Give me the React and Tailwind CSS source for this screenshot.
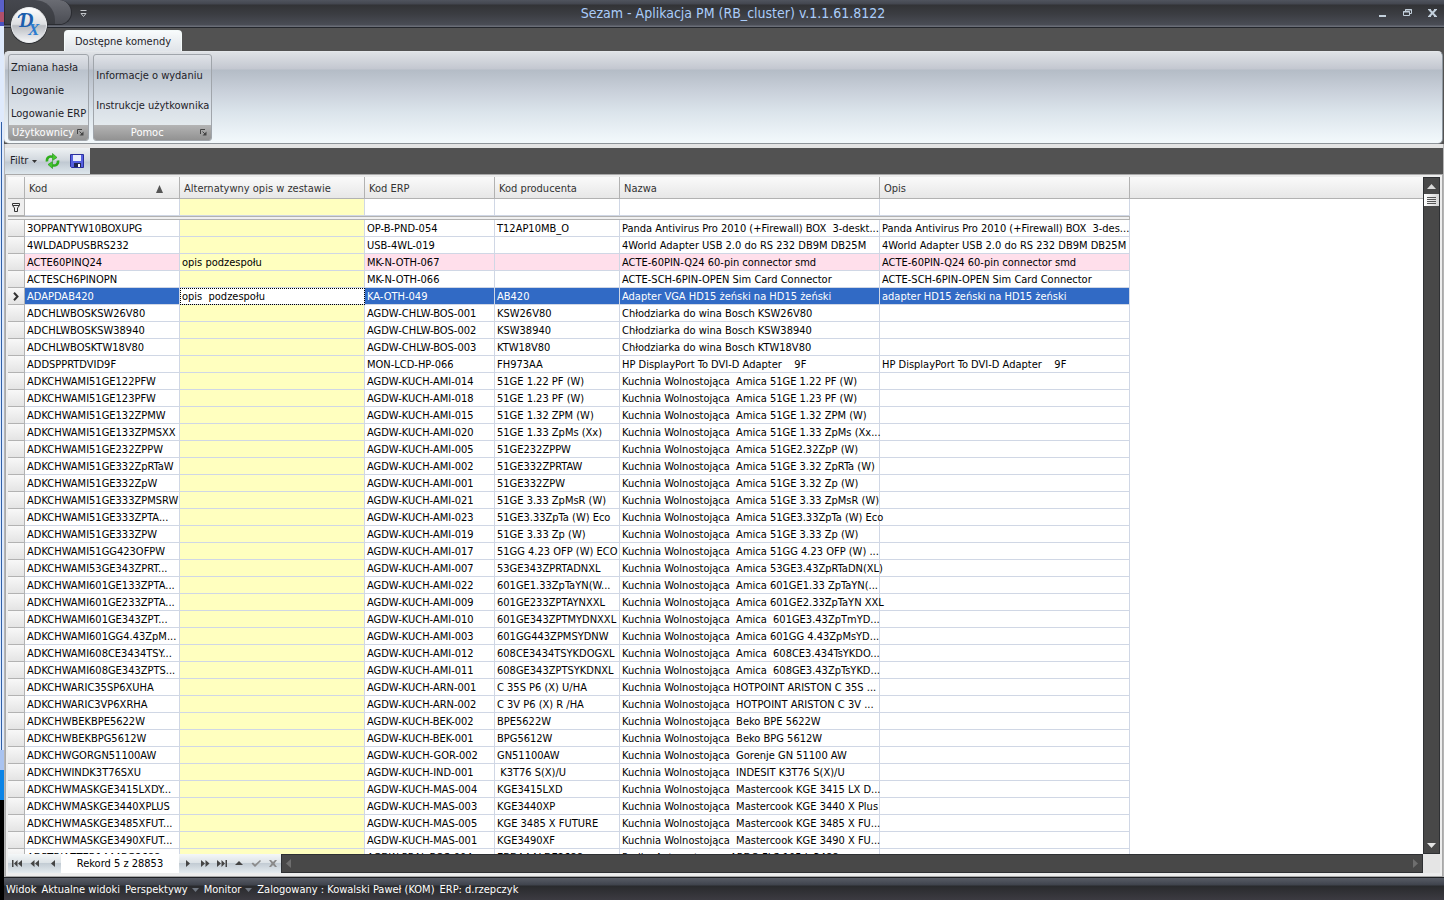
// File: src/App.jsx
const columns = [
  { key: 'kod', label: 'Kod', sorted: true },
  { key: 'alt', label: 'Alternatywny opis w zestawie' },
  { key: 'erp', label: 'Kod ERP' },
  { key: 'prod', label: 'Kod producenta' },
  { key: 'nazwa', label: 'Nazwa' },
  { key: 'opis', label: 'Opis' },
];

// kod, alternatywny opis, kod ERP, kod producenta, nazwa, opis
const rows = [
  ['3OPPANTYW10BOXUPG', '', 'OP-B-PND-054', 'T12AP10MB_O', 'Panda Antivirus Pro 2010 (+Firewall) BOX  3-deskt...', 'Panda Antivirus Pro 2010 (+Firewall) BOX  3-des...'],
  ['4WLDADPUSBRS232', '', 'USB-4WL-019', '', '4World Adapter USB 2.0 do RS 232 DB9M DB25M', '4World Adapter USB 2.0 do RS 232 DB9M DB25M'],
  ['ACTE60PINQ24', 'opis podzespołu', 'MK-N-OTH-067', '', 'ACTE-60PIN-Q24 60-pin connector smd', 'ACTE-60PIN-Q24 60-pin connector smd'],
  ['ACTESCH6PINOPN', '', 'MK-N-OTH-066', '', 'ACTE-SCH-6PIN-OPEN Sim Card Connector', 'ACTE-SCH-6PIN-OPEN Sim Card Connector'],
  ['ADAPDAB420', 'opis  podzespołu', 'KA-OTH-049', 'AB420', 'Adapter VGA HD15 żeński na HD15 żeński', 'adapter HD15 żeński na HD15 żeński'],
  ['ADCHLWBOSKSW26V80', '', 'AGDW-CHLW-BOS-001', 'KSW26V80', 'Chłodziarka do wina Bosch KSW26V80', ''],
  ['ADCHLWBOSKSW38940', '', 'AGDW-CHLW-BOS-002', 'KSW38940', 'Chłodziarka do wina Bosch KSW38940', ''],
  ['ADCHLWBOSKTW18V80', '', 'AGDW-CHLW-BOS-003', 'KTW18V80', 'Chłodziarka do wina Bosch KTW18V80', ''],
  ['ADDSPPRTDVID9F', '', 'MON-LCD-HP-066', 'FH973AA', 'HP DisplayPort To DVI-D Adapter    9F', 'HP DisplayPort To DVI-D Adapter    9F'],
  ['ADKCHWAMI51GE122PFW', '', 'AGDW-KUCH-AMI-014', '51GE 1.22 PF (W)', 'Kuchnia Wolnostojąca  Amica 51GE 1.22 PF (W)', ''],
  ['ADKCHWAMI51GE123PFW', '', 'AGDW-KUCH-AMI-018', '51GE 1.23 PF (W)', 'Kuchnia Wolnostojąca  Amica 51GE 1.23 PF (W)', ''],
  ['ADKCHWAMI51GE132ZPMW', '', 'AGDW-KUCH-AMI-015', '51GE 1.32 ZPM (W)', 'Kuchnia Wolnostojąca  Amica 51GE 1.32 ZPM (W)', ''],
  ['ADKCHWAMI51GE133ZPMSXX', '', 'AGDW-KUCH-AMI-020', '51GE 1.33 ZpMs (Xx)', 'Kuchnia Wolnostojąca  Amica 51GE 1.33 ZpMs (Xx...', ''],
  ['ADKCHWAMI51GE232ZPPW', '', 'AGDW-KUCH-AMI-005', '51GE232ZPPW', 'Kuchnia Wolnostojąca  Amica 51GE2.32ZpP (W)', ''],
  ['ADKCHWAMI51GE332ZpRTaW', '', 'AGDW-KUCH-AMI-002', '51GE332ZPRTAW', 'Kuchnia Wolnostojąca  Amica 51GE 3.32 ZpRTa (W)', ''],
  ['ADKCHWAMI51GE332ZpW', '', 'AGDW-KUCH-AMI-001', '51GE332ZPW', 'Kuchnia Wolnostojąca  Amica 51GE 3.32 Zp (W)', ''],
  ['ADKCHWAMI51GE333ZPMSRW', '', 'AGDW-KUCH-AMI-021', '51GE 3.33 ZpMsR (W)', 'Kuchnia Wolnostojąca  Amica 51GE 3.33 ZpMsR (W)', ''],
  ['ADKCHWAMI51GE333ZPTA...', '', 'AGDW-KUCH-AMI-023', '51GE3.33ZpTa (W) Eco', 'Kuchnia Wolnostojąca  Amica 51GE3.33ZpTa (W) Eco', ''],
  ['ADKCHWAMI51GE333ZPW', '', 'AGDW-KUCH-AMI-019', '51GE 3.33 Zp (W)', 'Kuchnia Wolnostojąca  Amica 51GE 3.33 Zp (W)', ''],
  ['ADKCHWAMI51GG423OFPW', '', 'AGDW-KUCH-AMI-017', '51GG 4.23 OFP (W) ECO', 'Kuchnia Wolnostojąca  Amica 51GG 4.23 OFP (W) ...', ''],
  ['ADKCHWAMI53GE343ZPRT...', '', 'AGDW-KUCH-AMI-007', '53GE343ZPRTADNXL', 'Kuchnia Wolnostojąca  Amica 53GE3.43ZpRTaDN(XL)', ''],
  ['ADKCHWAMI601GE133ZPTA...', '', 'AGDW-KUCH-AMI-022', '601GE1.33ZpTaYN(W...', 'Kuchnia Wolnostojąca  Amica 601GE1.33 ZpTaYN(...', ''],
  ['ADKCHWAMI601GE233ZPTA...', '', 'AGDW-KUCH-AMI-009', '601GE233ZPTAYNXXL', 'Kuchnia Wolnostojąca  Amica 601GE2.33ZpTaYN XXL', ''],
  ['ADKCHWAMI601GE343ZPT...', '', 'AGDW-KUCH-AMI-010', '601GE343ZPTMYDNXXL', 'Kuchnia Wolnostojąca  Amica  601GE3.43ZpTmYD...', ''],
  ['ADKCHWAMI601GG4.43ZpM...', '', 'AGDW-KUCH-AMI-003', '601GG443ZPMSYDNW', 'Kuchnia Wolnostojąca  Amica 601GG 4.43ZpMsYD...', ''],
  ['ADKCHWAMI608CE3434TSY...', '', 'AGDW-KUCH-AMI-012', '608CE3434TSYKDOGXL', 'Kuchnia Wolnostojąca  Amica  608CE3.434TsYKDO...', ''],
  ['ADKCHWAMI608GE343ZPTS...', '', 'AGDW-KUCH-AMI-011', '608GE343ZPTSYKDNXL', 'Kuchnia Wolnostojąca  Amica  608GE3.43ZpTsYKD...', ''],
  ['ADKCHWARIC35SP6XUHA', '', 'AGDW-KUCH-ARN-001', 'C 35S P6 (X) U/HA', 'Kuchnia Wolnostojąca HOTPOINT ARISTON C 35S ...', ''],
  ['ADKCHWARIC3VP6XRHA', '', 'AGDW-KUCH-ARN-002', 'C 3V P6 (X) R /HA', 'Kuchnia Wolnostojąca  HOTPOINT ARISTON C 3V ...', ''],
  ['ADKCHWBEKBPE5622W', '', 'AGDW-KUCH-BEK-002', 'BPE5622W', 'Kuchnia Wolnostojąca  Beko BPE 5622W', ''],
  ['ADKCHWBEKBPG5612W', '', 'AGDW-KUCH-BEK-001', 'BPG5612W', 'Kuchnia Wolnostojąca  Beko BPG 5612W', ''],
  ['ADKCHWGORGN51100AW', '', 'AGDW-KUCH-GOR-002', 'GN51100AW', 'Kuchnia Wolnostojąca  Gorenje GN 51100 AW', ''],
  ['ADKCHWINDK3T76SXU', '', 'AGDW-KUCH-IND-001', ' K3T76 S(X)/U', 'Kuchnia Wolnostojąca  INDESIT K3T76 S(X)/U', ''],
  ['ADKCHWMASKGE3415LXDY...', '', 'AGDW-KUCH-MAS-004', 'KGE3415LXD', 'Kuchnia Wolnostojąca  Mastercook KGE 3415 LX D...', ''],
  ['ADKCHWMASKGE3440XPLUS', '', 'AGDW-KUCH-MAS-003', 'KGE3440XP', 'Kuchnia Wolnostojąca  Mastercook KGE 3440 X Plus', ''],
  ['ADKCHWMASKGE3485XFUT...', '', 'AGDW-KUCH-MAS-005', 'KGE 3485 X FUTURE', 'Kuchnia Wolnostojąca  Mastercook KGE 3485 X FU...', ''],
  ['ADKCHWMASKGE3490XFUT...', '', 'AGDW-KUCH-MAS-001', 'KGE3490XF', 'Kuchnia Wolnostojąca  Mastercook KGE 3490 X FU...', ''],
  ['ADPTRJAZTER1444BG2688', '', 'AGDW-PRAL-BOS-004', 'EBDAAALDE2688', 'Pralka Automatyczna ARDO FLS 105 L 3488', ''],
];

const SELECTED = 4;
const HIGHLIGHTED = 2;

function cellClass(rowIndex, key) {
  if (key === 'alt') {
    return rowIndex === SELECTED
      ? 'bg-white outline-1 -outline-offset-1 outline-dotted outline-black'
      : 'bg-[#ffffbf]';
  }
  if (rowIndex === SELECTED) return 'bg-[#316ac5] text-white';
  if (rowIndex === HIGHLIGHTED) return 'bg-[#ffdfeb]';
  return 'bg-white';
}

function Logo() {
  return (
    <svg width="38" height="38" viewBox="0 0 38 38" className="absolute left-1.5 top-1.5 z-10" aria-hidden="true">
      <defs>
        <linearGradient id="orb" x1="0" y1="0" x2="0" y2="1">
          <stop offset="0" stopColor="#ffffff" />
          <stop offset="0.48" stopColor="#dcdee1" />
          <stop offset="0.52" stopColor="#b9bcc1" />
          <stop offset="1" stopColor="#f6f7f9" />
        </linearGradient>
      </defs>
      <circle cx="19" cy="19.5" r="18.5" fill="#2b2d31" />
      <circle cx="19" cy="19" r="17.5" fill="url(#orb)" stroke="#eceef0" />
      <g fill="#1c5fae" fontFamily="Liberation Serif, serif" fontStyle="italic" fontWeight="bold">
        <text x="9" y="21" fontSize="20">D</text>
        <text x="18" y="29" fontSize="17" fill="#2b7cd0">X</text>
      </g>
      <path d="M8.500 12c0-3 3-4 7-4" fill="none" stroke="#1c5fae" strokeWidth="1.5" />
    </svg>
  );
}

function TitleBar() {
  return (
    <header className="relative flex h-7 shrink-0 items-center border-b border-[#24272d] bg-[linear-gradient(#50545e_0px,#43464f_4px,#323336_5px,#3b3d42_14px,#4a4d56_25px,#6a6e78_26px)]">
      <Logo />
      <div className="h-full w-[68px] pb-0.5">
        <div className="h-full rounded-r-full border border-t-0 border-[#2a2c31] bg-[linear-gradient(#6a6c73,#4b4d54)]">
          <div className="h-full w-[50px] rounded-tr-[20px] bg-[linear-gradient(#45474e,#3b3d42)]" />
        </div>
      </div>
      <button aria-label="Dostosuj pasek" className="ml-2 text-[#c5c8cc]">
        <svg width="7" height="8" viewBox="0 0 7 8" fill="none" stroke="currentColor">
          <path d="M0.5 0.5h6M1 3.5h5L3.5 6.5z" />
        </svg>
      </button>
      <h1 className="flex-1 pb-0.5 text-center text-[14px] leading-4 text-[#abcdfa]">
        Sezam - Aplikacja PM (RB_cluster) v.1.1.61.8122
      </h1>
      <div className="flex items-center gap-4 pr-[7px] pb-0.5 text-[#c3d0dc]">
        <button aria-label="Minimalizuj">
          <svg width="8" height="10" viewBox="0 0 8 10" fill="currentColor"><path d="M0 7h7v2H0z" /></svg>
        </button>
        <button aria-label="Przywróć">
          <svg width="9" height="8" viewBox="0 0 9 8" fill="none" stroke="currentColor">
            <path d="M2.5 2V0.5h6v4H7M2 1h7M0.5 2.5h6v4h-6zM0 3h7" />
          </svg>
        </button>
        <button aria-label="Zamknij">
          <svg width="9" height="8" viewBox="0 0 9 8" fill="none" stroke="currentColor" strokeWidth="2">
            <path d="M1.2 0.5l6.6 7M7.8 0.5l-6.6 7" />
            <path d="M0 0.5h3M6 0.5h3M0 7.5h3M6 7.5h3" strokeWidth="1" />
          </svg>
        </button>
      </div>
    </header>
  );
}

function RibbonGroup({ title, items, roomy }) {
  return (
    <section className="flex h-[87px] flex-col overflow-hidden rounded-[3px] border border-[#a0a5ab] bg-[linear-gradient(#e0e3e8_0px,#c8cdd5_14px,#bac2cc_15px,#d5dce4_45px,#e3e9ed_70px)]">
      <div className={`flex flex-1 flex-col items-start justify-center px-0.5 pt-0.5 ${roomy ? 'gap-3.5' : 'gap-[7px]'}`}>
        {items.map((item) => (
          <button key={item} className="leading-4 whitespace-nowrap text-[#1e2229]">{item}</button>
        ))}
      </div>
      <div className="flex h-[15px] items-center bg-[linear-gradient(#b4b4b4,#929292)] pr-1 text-white">
        <h2 className="flex-1 text-center leading-[15px] whitespace-nowrap">{title}</h2>
        <button aria-label={`${title} - opcje`}>
          <svg width="7" height="7" viewBox="0 0 7 7" fill="none" stroke="#444">
            <path d="M0.500 5V0.500H5M2.500 2.500l2.500 2.500" />
            <path d="M6.500 2.500v4h-4z" fill="#444" stroke="none" />
          </svg>
        </button>
      </div>
    </section>
  );
}

function Ribbon() {
  return (
    <>
      <nav className="flex h-[23px] shrink-0 items-end bg-[#525252] pl-[60px]">
        <button className="h-[21px] rounded-t border border-b-0 border-[#f4fafa] bg-[linear-gradient(#f8fbfc,#e0e4e9)] px-2.5 pt-0.5 leading-4 text-[#1e2229]">
          Dostępne komendy
        </button>
      </nav>
      <div className="bg-[#525252] pr-px">
        <div className="flex h-[93px] gap-1 rounded-[5px] border border-[#e4e7ea] border-r-[#8e979f] border-b-[#8e9499] bg-[linear-gradient(#dfe2e6_0px,#c3c7d0_17px,#b4bcc6_18px,#c8cfd9_38px,#dbe4eb_60px,#f3f9fc_91px)] px-[3px] pt-0.5">
          <RibbonGroup title="Użytkownicy" items={['Zmiana hasła', 'Logowanie', 'Logowanie ERP']} />
          <RibbonGroup title="Pomoc" items={['Informacje o wydaniu', 'Instrukcje użytkownika']} roomy />
        </div>
      </div>
    </>
  );
}

function Toolbar() {
  return (
    <div className="flex h-[26px] shrink-0 bg-[#525252]">
      <div className="flex items-center bg-[linear-gradient(#eef2f4,#d3d9df_45%,#c0c9d2_55%,#dde6ec)] pr-1.5 pl-[5px]">
        <button className="flex items-center gap-1 text-[#1e2229]">
          Filtr
          <svg width="5" height="3" viewBox="0 0 5 3" fill="#333"><path d="M0 0h5L2.5 3z" /></svg>
        </button>
        <button aria-label="Odśwież" className="ml-2">
          <svg width="15" height="16" viewBox="0 0 15 16">
            <path d="M2 8.500C1.500 4.500 4.500 2.800 7.500 3.800" fill="none" stroke="#2fae1d" strokeWidth="2.6" />
            <path d="M7.500 0.500v7L12 4.500z" fill="#43c92c" stroke="#1f8f12" strokeWidth="0.6" />
            <path d="M13 7.500c0.500 4-2.500 5.700-5.500 4.700" fill="none" stroke="#2fae1d" strokeWidth="2.6" />
            <path d="M7.500 15.500v-7L3 11.500z" fill="#43c92c" stroke="#1f8f12" strokeWidth="0.6" />
          </svg>
        </button>
        <button aria-label="Zapisz" className="ml-2.5">
          <svg width="14" height="14" viewBox="0 0 14 14">
            <path d="M0.500 0.500h13v13h-12l-1-1z" fill="#5560e0" stroke="#2a2f9c" />
            <path d="M3 1h8v6H3z" fill="#e9edfb" />
            <path d="M4 9h7v4H4z" fill="#20264f" />
            <path d="M8 10h2v3H8z" fill="#fff" />
          </svg>
        </button>
      </div>
    </div>
  );
}

function Grid() {
  return (
    <table className="w-full table-fixed border-separate border-spacing-0 text-left">
      <colgroup>
        <col className="w-[17px]" />
        <col className="w-[155px]" />
        <col className="w-[185px]" />
        <col className="w-[130px]" />
        <col className="w-[125px]" />
        <col className="w-[260px]" />
        <col className="w-[250px]" />
        <col />
      </colgroup>
      <thead>
        <tr className="h-[22px] bg-[linear-gradient(#fafafa,#e6e6e6)] text-[#333]">
          <td className="border-r border-b border-[#b2b2b2] p-0" />
          {columns.map((c) => (
            <th key={c.key} scope="col" className="border-r border-b border-[#b2b2b2] p-0 pl-1 font-normal whitespace-nowrap">
              <span className="flex items-center justify-between pt-0.5 pr-4 leading-4">
                {c.label}
                {c.sorted && (
                  <svg width="7" height="8" viewBox="0 0 7 8" fill="#555"><path d="M3.500 0L7 8H0z" /></svg>
                )}
              </span>
            </th>
          ))}
          <td className="border-b border-[#b2b2b2] p-0" />
        </tr>
        <tr className="h-[17px]">
          <td className="border-r border-b border-[#b2b2b2] bg-[#efefef] p-0">
            <svg width="8" height="9" viewBox="0 0 8 9" fill="none" stroke="#333" className="mx-auto">
              <path d="M0.500 0.500h7v2L5.500 5v3.500h-3V5l-2-2.500zM1 2.500h6" />
            </svg>
          </td>
          {columns.map((c) => (
            <td key={c.key} className={`border-r border-b border-[#d0d7e5] p-0 ${c.key === 'alt' ? 'bg-[#ffffbf]' : 'bg-white'}`}>
              <input aria-label={c.label} className="block h-4 w-full px-0.5 outline-none" />
            </td>
          ))}
          <td className="p-0" />
        </tr>
        <tr className="h-1">
          <td colSpan={7} className="h-1 border-y border-r border-[#b2b2b2] bg-[#f0f0f0] p-0" />
          <td className="p-0" />
        </tr>
      </thead>
      <tbody>
        {rows.map((row, i) => (
          <tr key={row[0]} className="h-[17px]">
            <td className="border-r border-b border-[#b2b2b2] bg-[linear-gradient(#f8f8f8,#e4e4e4)] p-0">
              {i === SELECTED && (
                <svg width="6" height="9" viewBox="0 0 6 9" fill="none" stroke="#333" strokeWidth="2" className="mx-auto">
                  <path d="M1 0.700l3.500 3.800L1 8.300" />
                </svg>
              )}
            </td>
            {columns.map((c, j) => (
              <td key={c.key} className={`border-r border-b border-[#d0d7e5] p-0 pt-0.5 pl-0.5 leading-[14px] whitespace-pre ${cellClass(i, c.key)}`}>
                {row[j]}
              </td>
            ))}
            <td className="p-0" />
          </tr>
        ))}
      </tbody>
    </table>
  );
}

function VerticalScroll() {
  return (
    <div className="flex w-[17px] shrink-0 flex-col items-center border border-[#2e3033] bg-[#484848]">
      <button aria-label="W górę" className="flex h-4 items-center">
        <svg width="9" height="5" viewBox="0 0 9 5" fill="#d8d8d8"><path d="M4.500 0L9 5H0z" /></svg>
      </button>
      <button aria-label="Przewiń" className="flex h-3 w-full flex-col items-center justify-center gap-px bg-[linear-gradient(90deg,#ffffff,#d4d4d4)]">
        <span className="h-px w-[9px] bg-[#555]" />
        <span className="h-px w-[9px] bg-[#555]" />
        <span className="h-px w-[9px] bg-[#555]" />
        <span className="h-px w-[9px] bg-[#555]" />
      </button>
      <div className="flex-1" />
      <button aria-label="W dół" className="flex h-4 items-center">
        <svg width="9" height="5" viewBox="0 0 9 5" fill="#e4e4e4"><path d="M0 0h9L4.500 5z" /></svg>
      </button>
    </div>
  );
}

const navBefore = [
  { label: 'Pierwszy', d: 'M0 0h1.500v7H0zM5.500 0v7L2 3.500zM10 0v7L6 3.500z' },
  { label: 'Poprzednia strona', d: 'M4.500 0v7L0.500 3.500zM9 0v7L5 3.500z' },
  { label: 'Poprzedni', d: 'M7 0v7L3 3.500z' },
];

const navAfter = [
  { label: 'Następny', d: 'M3 0v7l4-3.500z' },
  { label: 'Następna strona', d: 'M1 0v7l4-3.500zM5.500 0v7l4-3.500z' },
  { label: 'Ostatni', d: 'M0 0v7l4-3.500zM4.500 0v7L8 3.500zM8.500 0H10v7H8.500z' },
  { label: 'Edytuj', d: 'M1 5l4-4 4 4z' },
  { label: 'Zatwierdź', d: 'M0.500 3.500L2 2.500l2 2L9 0l1 1-6 6z', muted: true },
  { label: 'Anuluj', d: 'M1 0h2l2 2 2-2h2L6.500 3.500 9 7H7L5 5 3 7H1l2.500-3.500z', muted: true },
];

function NavButton({ label, d, muted }) {
  return (
    <button aria-label={label} className="flex h-full w-[17px] items-center justify-center">
      <svg width="10" height="7" viewBox="0 0 10 7" className={muted ? 'fill-[#8a8a8a]' : 'fill-[#444]'}>
        <path d={d} />
      </svg>
    </button>
  );
}

function Navigator() {
  return (
    <div className="flex h-[19px] shrink-0 bg-[linear-gradient(#f4f7f8,#dde3e7_45%,#c3ccd4_50%,#e4ebef)]">
      <div className="flex gap-px">
        {navBefore.map((b) => <NavButton key={b.label} {...b} />)}
      </div>
      <div className="w-[118px] bg-white pt-px text-center leading-[18px]">Rekord 5 z 28853</div>
      <div className="flex">
        {navAfter.map((b) => <NavButton key={b.label} {...b} />)}
      </div>
      <div className="flex flex-1 items-center justify-between border border-[#2e3033] bg-[#484848] px-1">
        <svg width="5" height="9" viewBox="0 0 5 9" fill="#6e6e6e"><path d="M5 0v9L0 4.500z" /></svg>
        <svg width="5" height="9" viewBox="0 0 5 9" fill="#6e6e6e"><path d="M0 0v9l5-4.500z" /></svg>
      </div>
      <div className="w-[17px] bg-[#e5e5e5]" />
    </div>
  );
}

function MenuArrow() {
  return (
    <svg width="7" height="4" viewBox="0 0 7 4" fill="#6f7680"><path d="M0 0h7L3.500 4z" /></svg>
  );
}

function StatusBar() {
  return (
    <footer className="flex h-[23px] shrink-0 items-center gap-[5px] border-t border-[#1d1f23] bg-[linear-gradient(#585c66_0px,#3f434c_7px,#292a2d_8px,#3c3b42_22px)] pt-0.5 pl-0.5 whitespace-nowrap text-white">
      <button>Widok</button>
      <button>Aktualne widoki</button>
      <button className="flex items-center gap-1">Perspektywy <MenuArrow /></button>
      <button className="flex items-center gap-1">Monitor <MenuArrow /></button>
      <span>Zalogowany : Kowalski Paweł (KOM)</span>
      <span>ERP: d.rzepczyk</span>
    </footer>
  );
}

// Sliver of the desktop visible left of the window
function DesktopEdge() {
  return (
    <div className="flex w-1 shrink-0 flex-col">
      <div className="h-[26px] bg-[linear-gradient(#5a60c8_12px,#b0506c_12px,#b0506c_22px,#4a52c0_22px)]" />
      <div className="h-24 bg-[#dfeafc]" />
      <div className="h-[628px] border-r-2 border-[#dfeafc] bg-[#dfeafc]">
        <div className="ml-px h-full w-px bg-[#2f5fa6]" />
      </div>
      <div className="h-5 bg-[#a9c3f0]" />
      <div className="h-[30px] bg-[#0b84e6]" />
      <div className="flex-1 bg-black" />
    </div>
  );
}

export default function App() {
  return (
    <div className="flex h-screen overflow-hidden font-['DejaVu_Sans_Condensed','Tahoma',sans-serif] text-[11px] text-black">
      <DesktopEdge />
      <div className="flex min-w-0 flex-1 flex-col">
        <TitleBar />
        <Ribbon />
        <main className="flex min-h-0 flex-1 flex-col border-x border-[#b5b5b5] bg-[#e4e4e4] pt-1">
          <Toolbar />
          <div className="flex min-h-0 flex-1 flex-col border border-[#a9a9a9] bg-[#ededed] px-0.5 pt-0.5 pb-[3px]">
            <div className="flex min-h-0 flex-1">
              <div className="min-w-0 flex-1 overflow-hidden bg-white">
                <Grid />
              </div>
              <VerticalScroll />
            </div>
            <Navigator />
          </div>
        </main>
        <StatusBar />
      </div>
    </div>
  );
}
